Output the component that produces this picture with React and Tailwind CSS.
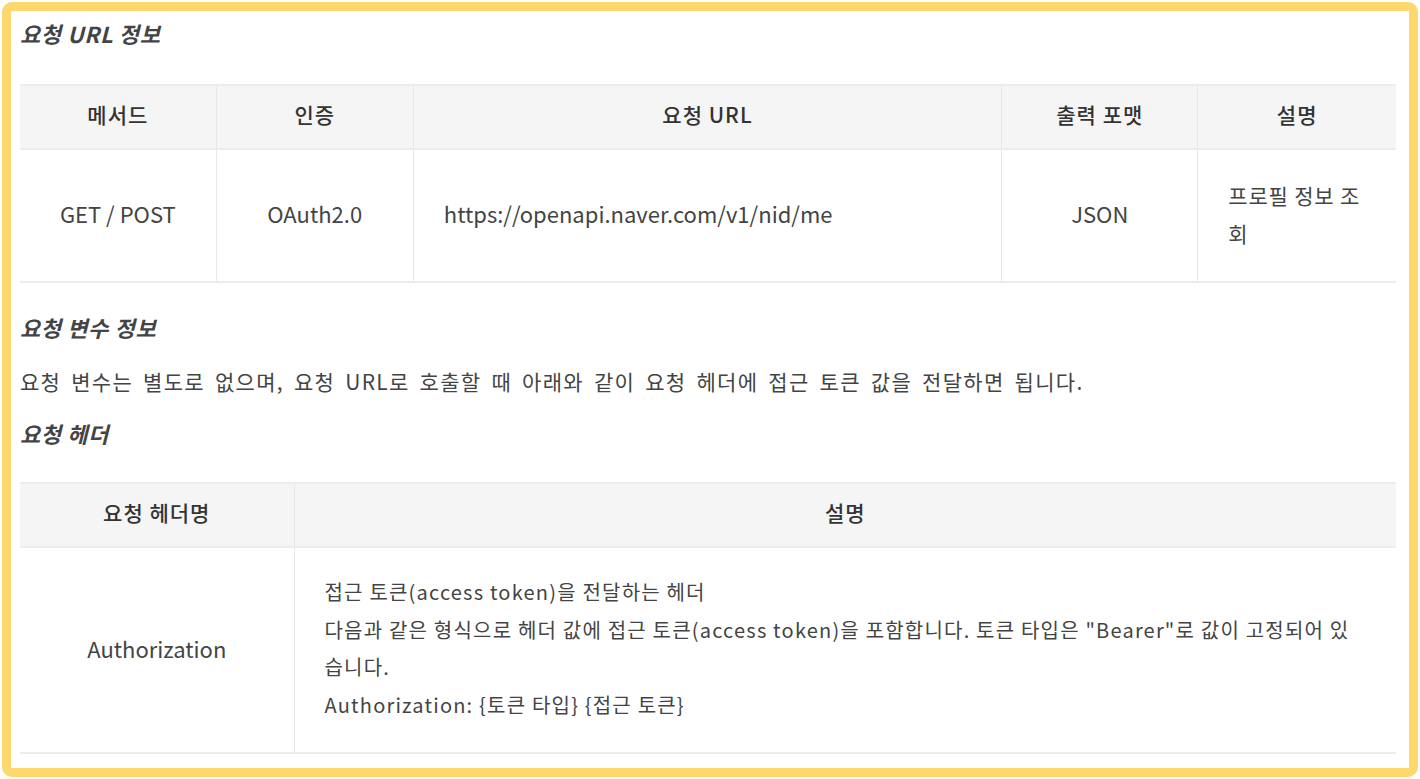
export default function App() {
  const font = { fontFamily: '"Noto Sans CJK KR", "Noto Sans", sans-serif' };
  return (
    <div className="w-[1420px] h-[779px] bg-white p-[2px]" style={font}>
      <div className="h-full rounded-[10px] border-[9px] border-[#fdd86f] bg-white pl-[9px] pr-[13px]">
        {/* 요청 URL 정보 */}
        <div className="h-[73px] pt-[7px]">
          <h3 className="text-[22px] leading-[30px] italic font-semibold tracking-[0.6px] text-[#444]">요청 URL 정보</h3>
        </div>

        <table className="w-full table-fixed border-collapse text-[22px] text-[#444]">
          <colgroup>
            <col className="w-[196px]" />
            <col className="w-[197px]" />
            <col className="w-[588px]" />
            <col className="w-[196px]" />
            <col className="w-[198px]" />
          </colgroup>
          <thead>
            <tr className="h-[64px] bg-[#f5f5f5] border-t-2 border-b-2 border-[#ececec] text-[21px] tracking-[1px]">
              <th className="font-medium text-[#333] border-r border-[#e8e8e8] pb-[4px]">메서드</th>
              <th className="font-medium text-[#333] border-r border-[#e8e8e8] pb-[4px]">인증</th>
              <th className="font-medium text-[#333] border-r border-[#e8e8e8] pb-[4px]">요청 URL</th>
              <th className="font-medium text-[#333] border-r border-[#e8e8e8] pb-[4px]">출력 포맷</th>
              <th className="font-medium text-[#333] pb-[4px]">설명</th>
            </tr>
          </thead>
          <tbody>
            <tr className="h-[133px] border-b-2 border-[#ececec]">
              <td className="text-center border-r border-[#e8e8e8] pb-[4px]">GET / POST</td>
              <td className="text-center border-r border-[#e8e8e8] pb-[4px]">OAuth2.0</td>
              <td className="pl-[30px] border-r border-[#e8e8e8] pb-[4px]">https://openapi.naver.com/v1/nid/me</td>
              <td className="text-center border-r border-[#e8e8e8] pb-[4px]">JSON</td>
              <td className="pl-[30px] pr-[10px] pb-[4px] text-[21px] tracking-[0.8px] leading-[38px]">프로필 정보 조<br />회</td>
            </tr>
          </tbody>
        </table>

        {/* 요청 변수 정보 */}
        <div className="pt-[29px]">
          <h3 className="text-[22px] leading-[30px] italic font-semibold tracking-[0.6px] text-[#444]">요청 변수 정보</h3>
          <p className="mt-[24px] text-[21px] leading-[30px] tracking-[1.3px] [word-spacing:4px] text-[#444]">
            요청 변수는 별도로 없으며, 요청 URL로 호출할 때 아래와 같이 요청 헤더에 접근 토큰 값을 전달하면 됩니다.
          </p>
          <h3 className="mt-[22px] text-[22px] leading-[30px] italic font-semibold tracking-[0.6px] text-[#444]">요청 헤더</h3>
        </div>

        <table className="mt-[34px] w-full table-fixed border-collapse text-[22px] text-[#444]">
          <colgroup>
            <col className="w-[274px]" />
            <col />
          </colgroup>
          <thead>
            <tr className="h-[64px] bg-[#f5f5f5] border-t-2 border-b-2 border-[#ececec] text-[21px] tracking-[1px]">
              <th className="font-medium text-[#333] border-r border-[#e8e8e8] pb-[4px]">요청 헤더명</th>
              <th className="font-medium text-[#333] pb-[4px]">설명</th>
            </tr>
          </thead>
          <tbody>
            <tr className="h-[206px] border-b-2 border-[#ececec]">
              <td className="text-center border-r border-[#e8e8e8] pb-[4px]">Authorization</td>
              <td className="pl-[30px] pr-[10px] pb-[4px] text-[20px] leading-[37.5px] tracking-[1.2px] whitespace-nowrap">
                접근 토큰(access token)을 전달하는 헤더<br />
                다음과 같은 형식으로 헤더 값에 접근 토큰(access token)을 포함합니다. 토큰 타입은 "Bearer"로 값이 고정되어 있<br />
                습니다.<br />
                Authorization: {'{'}토큰 타입{'}'} {'{'}접근 토큰{'}'}
              </td>
            </tr>
          </tbody>
        </table>
      </div>
    </div>
  );
}
